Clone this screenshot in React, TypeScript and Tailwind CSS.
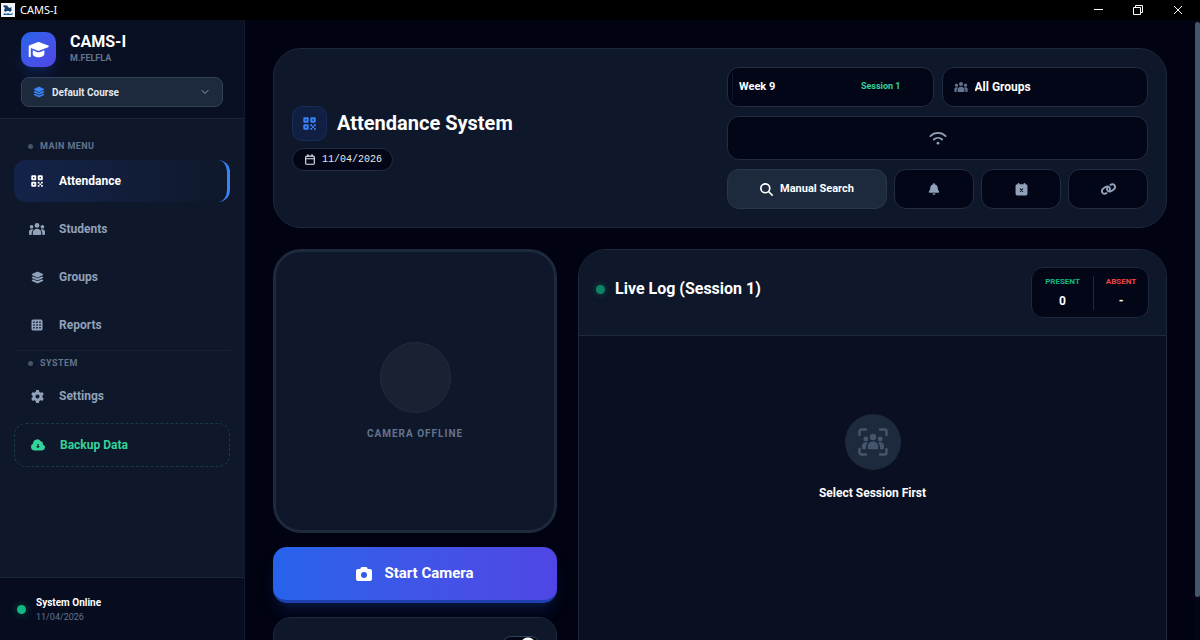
import type { ReactNode } from "react";
import clsx from "clsx";
import { FaBell, FaCamera, FaGear, FaLayerGroup, FaMagnifyingGlass } from "react-icons/fa6";
import { ChevronDown } from "lucide-react";

type IconProps = { className?: string };

function CapIcon({ className }: IconProps) {
  return (
    <svg viewBox="0 0 30 24" className={className} fill="currentColor" aria-hidden="true">
      <path d="M15 1.200c.5 0 1 .1 1.500.3l12.300 4.700a1.400 1.400 0 0 1 0 2.600l-12.300 4.700c-1 .4-2 .4-3 0L4 9.900v11.600a1.500 1.500 0 0 1-3 0V8c0-1 .5-1.700 1.300-2l11.200-4.500c.5-.2 1-.3 1.500-.3Z" />
      <path d="M6.800 13.200l5.700 2.200c1.600.6 3.400.6 5 0l5.900-2.200V18c0 3-3.700 5-8.300 5s-8.300-2-8.300-5Z" />
    </svg>
  );
}

function QrIcon({ className }: IconProps) {
  return (
    <svg viewBox="0 0 24 24" className={className} fill="currentColor" aria-hidden="true">
      <path
        fillRule="evenodd"
        d="M2.500.500h6a2 2 0 0 1 2 2v6a2 2 0 0 1-2 2h-6a2 2 0 0 1-2-2v-6a2 2 0 0 1 2-2ZM4.200 4.200v2.600h2.600V4.200ZM15.500.500h6a2 2 0 0 1 2 2v6a2 2 0 0 1-2 2h-6a2 2 0 0 1-2-2v-6a2 2 0 0 1 2-2Zm1.700 3.700v2.600h2.600V4.200ZM2.500 13.500h6a2 2 0 0 1 2 2v6a2 2 0 0 1-2 2h-6a2 2 0 0 1-2-2v-6a2 2 0 0 1 2-2Zm1.700 3.700v2.600h2.600v-2.600Z"
      />
      <path d="M13.500 13.500h3.400v3.400h-3.400zM20.100 13.500h3.400v3.400h-3.400zM16.800 16.800h3.400v3.400h-3.400zM13.500 20.100h3.400v3.400h-3.400zM20.100 20.100h3.400v3.400h-3.400z" />
    </svg>
  );
}

function UsersIcon({ className }: IconProps) {
  return (
    <svg viewBox="0 0 32 24" className={className} fill="currentColor" aria-hidden="true">
      <circle cx="16" cy="4.800" r="4.800" />
      <circle cx="5.200" cy="7.500" r="3.700" />
      <circle cx="26.800" cy="7.500" r="3.700" />
      <path d="M16 11.500c5 0 8.500 3.500 8.500 8.500v2.200a1.800 1.800 0 0 1-1.800 1.800H9.300a1.800 1.800 0 0 1-1.800-1.800V20c0-5 3.500-8.500 8.500-8.500Z" />
      <path d="M5.500 12.700c1.200 0 2.200.3 3.100.8A10.500 10.500 0 0 0 5.300 21v3H1.800A1.800 1.800 0 0 1 0 22.200V18c0-3.200 2.300-5.300 5.500-5.300ZM26.500 12.700c-1.200 0-2.200.3-3.100.8A10.500 10.500 0 0 1 26.700 21v3h3.500a1.800 1.800 0 0 0 1.800-1.800V18c0-3.200-2.300-5.300-5.500-5.300Z" />
    </svg>
  );
}

function TableIcon({ className }: IconProps) {
  return (
    <svg viewBox="0 0 24 24" className={className} fill="currentColor" aria-hidden="true">
      <path
        fillRule="evenodd"
        d="M4 1h16a3 3 0 0 1 3 3v16a3 3 0 0 1-3 3H4a3 3 0 0 1-3-3V4a3 3 0 0 1 3-3ZM4.500 5v2.800h3V5Zm6 0v2.800h3V5Zm6 0v2.800h3V5Zm-12 5.600v2.800h3v-2.800Zm6 0v2.800h3v-2.800Zm6 0v2.800h3v-2.800Zm-12 5.600V19h3v-2.800Zm6 0V19h3v-2.800Zm6 0V19h3v-2.800Z"
      />
    </svg>
  );
}

function CloudDownIcon({ className }: IconProps) {
  return (
    <svg viewBox="0 0 28 24" className={className} fill="currentColor" aria-hidden="true">
      <path
        fillRule="evenodd"
        d="M7 23A7 7 0 0 1 4 9.700 8.500 8.500 0 0 1 19.500 4.500a5.500 5.500 0 0 1 4.300 6.300A6.300 6.300 0 0 1 22 23Zm5.900-13v4.300h-2.700l3.800 4.300 3.800-4.300h-2.700V10Z"
      />
    </svg>
  );
}

function CalendarIcon({ className }: IconProps) {
  return (
    <svg
      viewBox="0 0 22 24"
      className={className}
      fill="none"
      stroke="currentColor"
      strokeWidth="2.400"
      strokeLinecap="round"
      aria-hidden="true"
    >
      <rect x="1.500" y="4.500" width="19" height="18" rx="2.500" />
      <path d="M1.500 10.500h19M6.500 1.200v3.300M15.500 1.200v3.300" />
    </svg>
  );
}

function CalendarXIcon({ className }: IconProps) {
  return (
    <svg viewBox="0 0 24 24" className={className} aria-hidden="true">
      <path
        fill="currentColor"
        d="M6.500 0A1.800 1.800 0 0 1 8.300 1.800V2.500h7.400v-.7a1.800 1.800 0 0 1 3.600 0v.7H20a3 3 0 0 1 3 3V20a3 3 0 0 1-3 3H4a3 3 0 0 1-3-3V5.500a3 3 0 0 1 3-3h.7v-.7A1.800 1.800 0 0 1 6.500 0Z"
      />
      <path d="m9.800 11 4.400 4.400M14.200 11l-4.400 4.400" className="stroke-[#020617]" strokeWidth="1.900" strokeLinecap="round" />
    </svg>
  );
}

function LinkIcon({ className }: IconProps) {
  return (
    <svg
      viewBox="0 0 30 24"
      className={className}
      fill="none"
      stroke="currentColor"
      strokeWidth="3.800"
      strokeLinecap="round"
      aria-hidden="true"
    >
      <path d="M11 20.300C8 22.300 4.500 21.800 2.900 19.300c-1.800-2.800-.8-6.500 2.400-8.800l3-2.100c3.200-2.200 7-1.900 8.700.8 1.500 2.400 1 5-1 6.800" />
      <path d="M19 3.700c3-2 6.500-1.500 8.100 1 1.800 2.800.8 6.500-2.400 8.800l-3 2.100c-3.200 2.200-7 1.900-8.700-.8-1.500-2.400-1-5 1-6.800" />
    </svg>
  );
}

function WifiIcon({ className }: IconProps) {
  return (
    <svg
      viewBox="0 0 26 20"
      className={className}
      fill="none"
      stroke="currentColor"
      strokeWidth="2.600"
      strokeLinecap="round"
      aria-hidden="true"
    >
      <path d="M2 7.200C8.300 1.200 17.700 1.200 24 7.200M7 12.200c3.500-3.200 8.500-3.200 12 0" />
      <circle cx="13" cy="17.500" r="2" fill="currentColor" stroke="none" />
    </svg>
  );
}

function UsersFrameIcon({ className }: IconProps) {
  return (
    <svg viewBox="0 0 30 28" className={className} fill="currentColor" aria-hidden="true">
      <path
        d="M1.500 7V3.500a2 2 0 0 1 2-2H8M22 1.500h4.500a2 2 0 0 1 2 2V7M28.500 21v3.500a2 2 0 0 1-2 2H22M8 26.500H3.500a2 2 0 0 1-2-2V21"
        fill="none"
        stroke="currentColor"
        strokeWidth="2.400"
        strokeLinecap="round"
      />
      <circle cx="15" cy="9" r="3.200" />
      <circle cx="7.800" cy="11" r="2.400" />
      <circle cx="22.200" cy="11" r="2.400" />
      <path d="M15 13.500c3 0 5.200 2.200 5.200 5.200V20a1.200 1.200 0 0 1-1.200 1.200h-8A1.200 1.200 0 0 1 9.800 20v-1.300c0-3 2.200-5.200 5.200-5.200ZM7.800 14.300c.8 0 1.400.1 2 .4a6.800 6.800 0 0 0-1.800 4.500v2H5.200A1.200 1.200 0 0 1 4 20v-2c0-2.200 1.600-3.700 3.800-3.700ZM22.200 14.300c-.8 0-1.400.1-2 .4a6.800 6.800 0 0 1 1.800 4.500v2h2.800A1.200 1.200 0 0 0 26 20v-2c0-2.200-1.600-3.700-3.800-3.700Z" />
    </svg>
  );
}

function TitleBar() {
  return (
    <div className="flex h-5 shrink-0 items-center justify-between bg-black text-white">
      <div className="flex items-center gap-[5px]">
        <svg viewBox="0 0 14 14" className="ml-px size-3.5" aria-hidden="true">
          <path d="M0 0h14v14H0z" fill="#f1f5f9" />
          <path d="M2 3l2-1 1 1 1-1 1 2 2 1 2-1-1 2 1 1-2 2-1-1H6L4 9 3 7l1-2Z" fill="#153e6b" />
          <path d="M2 11l2-1 1 1 2-1 2 1 3-1-1 2H3Z" fill="#2b6794" />
        </svg>
        <span className="font-['Noto_Sans',sans-serif] text-[11px]">CAMS-I</span>
      </div>
      <div className="flex items-center pr-0.5">
        <button type="button" aria-label="Minimize" className="flex h-5 w-10 items-center justify-center">
          <svg viewBox="0 0 10 10" className="size-2.5" stroke="currentColor">
            <path d="M1 4.500h9" />
          </svg>
        </button>
        <button type="button" aria-label="Restore" className="flex h-5 w-10 items-center justify-center">
          <svg viewBox="0 0 10 10" className="size-2.5" stroke="currentColor" fill="none">
            <path d="M.5 2.500h7v7h-7zM2.500 2.500v-2h7v7h-2" />
          </svg>
        </button>
        <button type="button" aria-label="Close" className="flex h-5 w-10 items-center justify-center">
          <svg viewBox="0 0 10 10" className="size-2.5" stroke="currentColor">
            <path d="m1 1 8 8M9 1 1 9" />
          </svg>
        </button>
      </div>
    </div>
  );
}

function NavLabel({ children }: { children: ReactNode }) {
  return (
    <h2 className="flex items-center gap-[7px] px-3.5 text-[9px] leading-3 font-bold tracking-wider text-slate-500">
      <span className="size-[5px] rounded-full bg-slate-600" />
      {children}
    </h2>
  );
}

type NavItemProps = {
  icon: ReactNode;
  label: string;
  active?: boolean;
};

function NavItem({ icon, label, active = false }: NavItemProps) {
  return (
    <a
      href="#"
      className={clsx(
        "flex h-[42px] items-center gap-[13px] rounded-xl px-3.5 text-xs font-bold",
        active
          ? "border-r-[3px] border-[#3b82f6] bg-linear-to-r from-[#14234a] to-[#0f182b] text-white"
          : "text-slate-400",
      )}
    >
      <span className="flex w-[18px] justify-center">{icon}</span>
      {label}
    </a>
  );
}

function Sidebar() {
  return (
    <aside className="flex w-[245px] shrink-0 flex-col border-r border-[#111a2e] bg-[#0f172a]">
      <div className="flex flex-col gap-2.5 border-b border-[#1c2639] bg-[#0a1024] px-[21px] pt-3 pb-[11px]">
        <div className="flex items-start gap-3.5">
          <div className="flex size-[35px] items-center justify-center rounded-[10px] bg-linear-to-br from-[#2563eb] to-[#4f46e5] text-white shadow-lg shadow-[#2563eb]/20">
            <CapIcon className="h-[17px] w-[21px]" />
          </div>
          <div>
            <h1 className="text-base leading-5 font-bold text-white">CAMS-I</h1>
            <p className="text-[9px] leading-3 font-bold text-slate-500">M.FELFLA</p>
          </div>
        </div>

        <label className="flex h-[30px] items-center gap-[7px] rounded-lg border border-slate-700 bg-slate-800 px-[11px]">
          <FaLayerGroup className="size-3 text-[#3b82f6]" />
          <select
            aria-label="Course"
            className="flex-1 appearance-none bg-transparent text-[10px] font-bold text-slate-200 outline-none"
          >
            <option>Default Course</option>
          </select>
          <ChevronDown className="size-3 text-slate-400" />
        </label>
      </div>

      <nav className="flex flex-1 flex-col px-3.5 pt-[21px]">
        <NavLabel>MAIN MENU</NavLabel>
        <div className="mt-2 flex flex-col gap-1.5">
          <NavItem active icon={<QrIcon className="size-3" />} label="Attendance" />
          <NavItem icon={<UsersIcon className="h-3 w-4" />} label="Students" />
          <NavItem icon={<FaLayerGroup className="size-[13px]" />} label="Groups" />
          <NavItem icon={<TableIcon className="size-3" />} label="Reports" />
        </div>
        <hr className="mt-1 mb-1.5 border-[#182236]" />
        <NavLabel>SYSTEM</NavLabel>
        <div className="mt-1.5 flex flex-col gap-1.5">
          <NavItem icon={<FaGear className="size-[13px]" />} label="Settings" />
          <button
            type="button"
            className="flex h-11 items-center gap-[13px] rounded-xl border border-dashed border-[#34d399]/20 px-3.5 text-xs font-bold text-[#34d399]"
          >
            <span className="flex w-[18px] justify-center">
              <CloudDownIcon className="h-3 w-3.5" />
            </span>
            Backup Data
          </button>
        </div>
      </nav>

      <div className="flex h-[63px] items-center gap-2.5 border-t border-[#1c2639] bg-[#070c1e] px-[17px]">
        <span className="size-[9px] rounded-full bg-[#10b981] shadow-[0_0_8px_#10b98166]" />
        <div>
          <p className="text-[10px] leading-4 font-bold text-white">System Online</p>
          <p className="text-[9px] leading-3 text-slate-500">11/04/2026</p>
        </div>
      </div>
    </aside>
  );
}

function ToolButton({ label, children }: { label: string; children: ReactNode }) {
  return (
    <button
      type="button"
      aria-label={label}
      className="flex h-10 items-center justify-center rounded-xl border border-[#232d41] bg-[#020617] text-slate-400"
    >
      {children}
    </button>
  );
}

function PageHeader() {
  return (
    <header className="grid grid-cols-2 items-center gap-3.5 rounded-[28px] border border-slate-800 bg-[#0f172a] p-[18px]">
      <div className="flex flex-col items-start gap-[7px]">
        <div className="flex items-center gap-2.5">
          <div className="flex size-[35px] items-center justify-center rounded-[10px] border border-[#182c5a] bg-[#111f42] text-[#3b82f6]">
            <QrIcon className="size-[13px]" />
          </div>
          <h2 className="text-xl leading-7 font-bold text-white">Attendance System</h2>
        </div>
        <p className="flex h-[23px] items-center gap-[7px] rounded-full border border-[#232d41] bg-[#020617] pr-2.5 pl-3 font-['Liberation_Mono',monospace] text-[10px] text-slate-200">
          <CalendarIcon className="h-[11px] w-2.5" />
          11/04/2026
        </p>
      </div>

      <div className="flex flex-col gap-[9px]">
        <div className="grid grid-cols-2 gap-2">
          <button
            type="button"
            className="flex h-10 items-center rounded-xl border border-[#232d41] bg-[#020617] pr-8 pl-1 text-left font-bold"
          >
            <span className="h-7 w-px bg-slate-900" />
            <span className="flex-1 pl-1.5 text-[11px] text-white">Week 9</span>
            <span className="text-[9px] text-[#34d399]">Session 1</span>
          </button>
          <label className="flex h-10 items-center gap-[7px] rounded-xl border border-[#232d41] bg-[#020617] px-[11px]">
            <UsersIcon className="h-2.5 w-3.5 text-slate-500" />
            <select
              aria-label="Group"
              className="flex-1 appearance-none bg-transparent text-xs font-bold text-white outline-none"
            >
              <option>All Groups</option>
            </select>
          </label>
        </div>

        <button
          type="button"
          aria-label="Connection"
          className="flex h-11 items-center justify-center rounded-xl border border-[#232d41] bg-[#020617] text-slate-400"
        >
          <WifiIcon className="h-3.5 w-[18px]" />
        </button>

        <div className="grid grid-cols-[2fr_1fr_1fr_1fr] gap-[7px]">
          <button
            type="button"
            className="flex h-10 items-center justify-center gap-[7px] rounded-xl border border-[#2a3649] bg-slate-800 text-[11px] font-bold text-white"
          >
            <FaMagnifyingGlass className="size-[13px]" />
            Manual Search
          </button>
          <ToolButton label="Notifications">
            <FaBell className="size-3" />
          </ToolButton>
          <ToolButton label="Cancel session">
            <CalendarXIcon className="size-[13px]" />
          </ToolButton>
          <ToolButton label="Copy link">
            <LinkIcon className="h-3 w-[15px]" />
          </ToolButton>
        </div>
      </div>
    </header>
  );
}

function CameraPanel() {
  return (
    <section className="col-span-4 flex flex-col gap-3.5">
      <div className="flex aspect-square flex-col items-center justify-center gap-3.5 rounded-[28px] border-[3px] border-slate-800 bg-[#0f172a]">
        <span className="size-[71px] rounded-full border border-[#222c3e] bg-[#1a2133]" />
        <p className="text-[10px] leading-3.5 font-bold tracking-widest text-slate-500">CAMERA OFFLINE</p>
      </div>

      <button
        type="button"
        className="flex h-14 items-center justify-center gap-3 rounded-[14px] border-b-[3px] border-[#1e40af] bg-linear-to-r from-[#2563eb] to-[#4f46e5] text-[15px] font-bold text-white shadow-lg shadow-[#1e3a8a]/30"
      >
        <FaCamera className="size-4" />
        Start Camera
      </button>

      <div className="flex h-20 items-start justify-end rounded-[18px] border border-slate-800 bg-[#0f172a] px-4 py-[18px]">
        <input
          type="checkbox"
          role="switch"
          defaultChecked
          aria-label="Toggle camera option"
          className="h-[18px] w-[38px] appearance-none rounded-full border border-slate-700 bg-[#020617] bg-[radial-gradient(circle_at_25px_8px,#fff_7px,transparent_8px)]"
        />
      </div>
    </section>
  );
}

function LiveLog() {
  return (
    <section className="col-span-8 flex min-h-[460px] flex-col overflow-hidden rounded-[28px] border border-slate-800 bg-[#0a1022]">
      <div className="flex items-start justify-between border-b border-slate-800 bg-[#0f172a] p-[17px]">
        <h2 className="flex items-center gap-2.5 pt-2 text-base leading-7 font-bold text-white">
          <span className="size-[9px] rounded-full bg-[#0d8463] shadow-[0_0_6px_#10b98166]" />
          Live Log (Session 1)
        </h2>
        <dl className="flex h-[51px] items-center rounded-xl border border-slate-800 bg-[#020617] text-center font-bold">
          <div className="flex w-[61px] flex-col gap-1">
            <dt className="text-[8px] leading-3 text-[#10b981]">PRESENT</dt>
            <dd className="text-xs leading-[18px] text-white">0</dd>
          </div>
          <div className="flex w-[55px] flex-col gap-1 border-l border-slate-800">
            <dt className="text-[8px] leading-3 text-[#ef4444]">ABSENT</dt>
            <dd className="text-xs leading-[18px] text-white">-</dd>
          </div>
        </dl>
      </div>

      <div className="flex flex-col items-center gap-3.5 pt-[78px]">
        <div className="flex size-14 items-center justify-center rounded-full bg-slate-800 text-slate-600">
          <UsersFrameIcon className="h-7 w-[30px]" />
        </div>
        <p className="text-xs leading-[18px] font-bold text-white">Select Session First</p>
      </div>
    </section>
  );
}

export default function App() {
  return (
    <div className="flex h-screen flex-col overflow-hidden bg-[#020617] font-[Roboto,sans-serif]">
      <TitleBar />
      <div className="flex min-h-0 flex-1">
        <Sidebar />
        <main className="min-w-0 flex-1 overflow-hidden bg-[#010312] p-7">
          <div className="flex flex-col gap-[21px]">
            <PageHeader />
            <div className="grid grid-cols-12 items-start gap-[21px]">
              <CameraPanel />
              <LiveLog />
            </div>
          </div>
        </main>
        {/* scroll track */}
        <div className="w-[5px] shrink-0 bg-[#020617] pt-0.5">
          <div className="h-[93%] rounded-full bg-slate-600" />
        </div>
      </div>
    </div>
  );
}
